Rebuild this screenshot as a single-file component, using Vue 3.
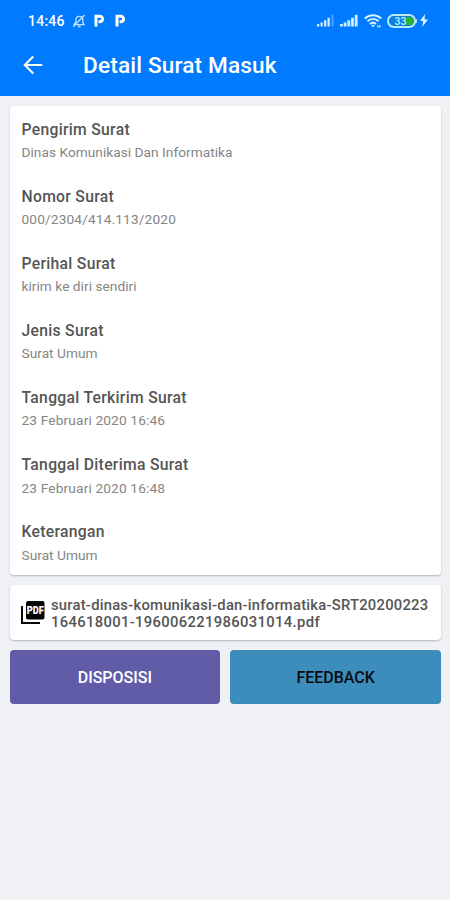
<script setup>
const details = [
  { label: 'Pengirim Surat', value: 'Dinas Komunikasi Dan Informatika' },
  { label: 'Nomor Surat', value: '000/2304/414.113/2020', numeric: true },
  { label: 'Perihal Surat', value: 'kirim ke diri sendiri' },
  { label: 'Jenis Surat', value: 'Surat Umum' },
  { label: 'Tanggal Terkirim Surat', value: '23 Februari 2020 16:46', numeric: true },
  { label: 'Tanggal Diterima Surat', value: '23 Februari 2020 16:48', numeric: true },
  { label: 'Keterangan', value: 'Surat Umum' },
]
</script>

<template>
  <div class="screen">
    <header class="header">
      <div class="status">
        <span class="clock">14:46</span>
        <svg class="bell" width="14" height="14" viewBox="0 0 14 14" fill="none" stroke="#bfe3ff" stroke-width="1.3">
          <path d="M1.5 10.7h10.6l-1.3-2V6C10.8 3.8 9.4 2.3 7.4 2.3S3.9 3.8 3.9 6v2.6L1.5 10.7M6 12.5h2.6M1.2 12.8 12.6 1" />
        </svg>
        <svg class="pay" width="11" height="13" viewBox="0 0 11 13" fill="none" stroke="#fff" stroke-width="3">
          <path d="M2 12.4V2.2h3.8a2.75 2.75 0 0 1 0 5.5H4.6" />
        </svg>
        <svg class="pay second" width="11" height="13" viewBox="0 0 11 13" fill="none" stroke="#fff" stroke-width="3">
          <path d="M2 12.4V2.2h3.8a2.75 2.75 0 0 1 0 5.5H4.6" />
        </svg>
        <div class="indicators">
          <svg width="17" height="13" viewBox="0 0 17 13" fill="#cdefff">
            <path d="M0 10h2.3v2.5H0zM3.5 8.5h2.3v4H3.5zM7 6.3h2.3v6.2H7zM10.5 3.7h2.3v8.8h-2.3z" />
            <path d="M14.5.5h2v12h-2z" opacity=".35" />
          </svg>
          <svg class="signal" width="18" height="13" viewBox="0 0 18 13" fill="#cdefff">
            <path d="M0 10h2.8v2.5H0zM3.7 8.5h2.8v4H3.7zM7.4 6.3h2.8v6.2H7.4zM11.1 3.7h2.8v8.8h-2.8zM14.8.8h2.8v11.7h-2.8z" />
          </svg>
          <svg class="wifi" width="18" height="14" viewBox="0 0 18 14" fill="none" stroke="#d5f3ff" stroke-width="2">
            <path d="M.8 4.6c4.7-4.4 11.7-4.4 16.4 0M3.4 7.3c3.3-3 7.9-3 11.2 0M6 10c1.8-1.6 4.2-1.6 6 0" />
            <path d="m7.2 11.4 1.8 1.8 1.8-1.8c-1-1-2.6-1-3.6 0z" fill="#d5f3ff" stroke="none" />
            <path d="M13.8 11.2v2.4m2-2.4v2.4" stroke-width="1.3" />
          </svg>
          <svg class="battery" width="30" height="14" viewBox="0 0 30 14">
            <rect x="1" y="1" width="27" height="12" rx="5.7" fill="#0b7fe5" stroke="#b9e9fa" stroke-width="2" />
            <path d="M19 3h3.7a3.7 3.7 0 0 1 3.7 3.7v.6a3.7 3.7 0 0 1-3.7 3.7H19z" fill="#29b52e" />
            <path d="M29.3 5v4" stroke="#b9e9fa" stroke-width="1.2" />
            <text x="7.5" y="10.7" font-family="Roboto, sans-serif" font-size="10.5" font-weight="500" fill="#bff1ff">33</text>
          </svg>
          <svg class="bolt" width="8" height="13" viewBox="0 0 8 13" fill="#dff6ff">
            <path d="M5 0 0 7h3.2L2.2 13 8 5.4H4.6z" />
          </svg>
        </div>
      </div>
      <div class="toolbar">
        <svg width="20" height="20" viewBox="0 0 20 20" fill="none" stroke="#fff" stroke-width="2.1">
          <path d="M19.3 10H2M10.2 1.6 1.8 10l8.4 8.4" />
        </svg>
        <h1>Detail Surat Masuk</h1>
      </div>
    </header>

    <main>
      <dl class="card details">
        <div v-for="item in details" :key="item.label" class="item">
          <dt>{{ item.label }}</dt>
          <dd :class="{ numeric: item.numeric }">{{ item.value }}</dd>
        </div>
      </dl>

      <div class="card file">
        <svg width="24" height="24" viewBox="0 0 24 24">
          <path d="M1 5v17h18" fill="none" stroke="#080808" stroke-width="2" />
          <rect x="5" y="0" width="18.5" height="18.5" rx="2" fill="#050505" />
          <text x="5.8" y="13" textLength="17" lengthAdjust="spacingAndGlyphs" font-family="Roboto, sans-serif" font-size="10.5" font-weight="900" fill="#fff">PDF</text>
        </svg>
        <div class="filename">surat-dinas-komunikasi-dan-informatika-SRT20200223<br><span class="numeric">164618001-196006221986031014.pdf</span></div>
      </div>

      <div class="actions">
        <button class="disposition">DISPOSISI</button>
        <button class="feedback">FEEDBACK</button>
      </div>
    </main>
  </div>
</template>

<style>
body {
  background: #eff1f5;
}
</style>

<style scoped>
.screen {
  box-sizing: border-box;
  height: 900px;
  overflow: hidden;
  background: #eff1f5;
  font-family: Roboto, sans-serif;
}

.header {
  height: 96px;
  background: #007aff;
  color: #fff;
}

.status {
  display: flex;
  align-items: center;
  height: 41px;
  padding: 0 22px 0 28px;
}

.clock {
  width: 44px;
  font-size: 14px;
  font-weight: 500;
  letter-spacing: 0.25px;
}

.pay {
  margin-left: 8px;
}

.second {
  margin-left: 10px;
}

.indicators {
  display: flex;
  align-items: center;
  margin-left: auto;
}

.signal {
  margin-left: 6px;
}

.wifi {
  margin-left: 6px;
}

.battery {
  margin-left: 5px;
}

.bolt {
  margin-left: 3px;
}

.toolbar {
  display: flex;
  align-items: center;
  height: 47px;
  padding-left: 23px;
}

h1 {
  margin: 3px 0 0 40px;
  font-size: 22.6px;
  font-weight: 500;
  line-height: 28px;
  letter-spacing: 0.17px;
}

main {
  display: flex;
  flex-direction: column;
  gap: 10px;
  padding: 10px 9px 0 9.5px;
}

.card {
  box-sizing: border-box;
  margin: 0;
  border-radius: 4px;
  background: #fff;
  box-shadow: 0 1px 2px rgba(50, 60, 75, 0.32);
}

.details {
  height: 469px;
  padding: 12.5px 12px 0;
}

.item {
  height: 67.1px;
}

dt {
  color: #555;
  font-size: 15.7px;
  font-weight: 500;
  line-height: 22px;
  letter-spacing: 0.3px;
}

dd {
  margin: 0.6px 0 0;
  color: #858585;
  font-size: 13.7px;
  line-height: 22px;
  letter-spacing: 0.03px;
}

dd.numeric {
  letter-spacing: 0.15px;
}

.file {
  display: flex;
  align-items: center;
  height: 55px;
  padding: 0 11.5px;
}

.filename {
  margin: 3px 0 0 6px;
  color: #555;
  font-size: 14.8px;
  font-weight: 500;
  line-height: 17px;
  letter-spacing: 0.23px;
  white-space: nowrap;
}

.filename .numeric {
  letter-spacing: 0.34px;
}

.actions {
  display: grid;
  grid-template-columns: 1fr 1fr;
  gap: 10px;
}

button {
  height: 54px;
  padding: 1px 0 0;
  border: 0;
  border-radius: 4px;
  font: 500 16px Roboto, sans-serif;
}

.disposition {
  background: #605ca8;
  color: #fff;
}

.feedback {
  background: #3c8dbc;
  color: #080b0e;
}
</style>
